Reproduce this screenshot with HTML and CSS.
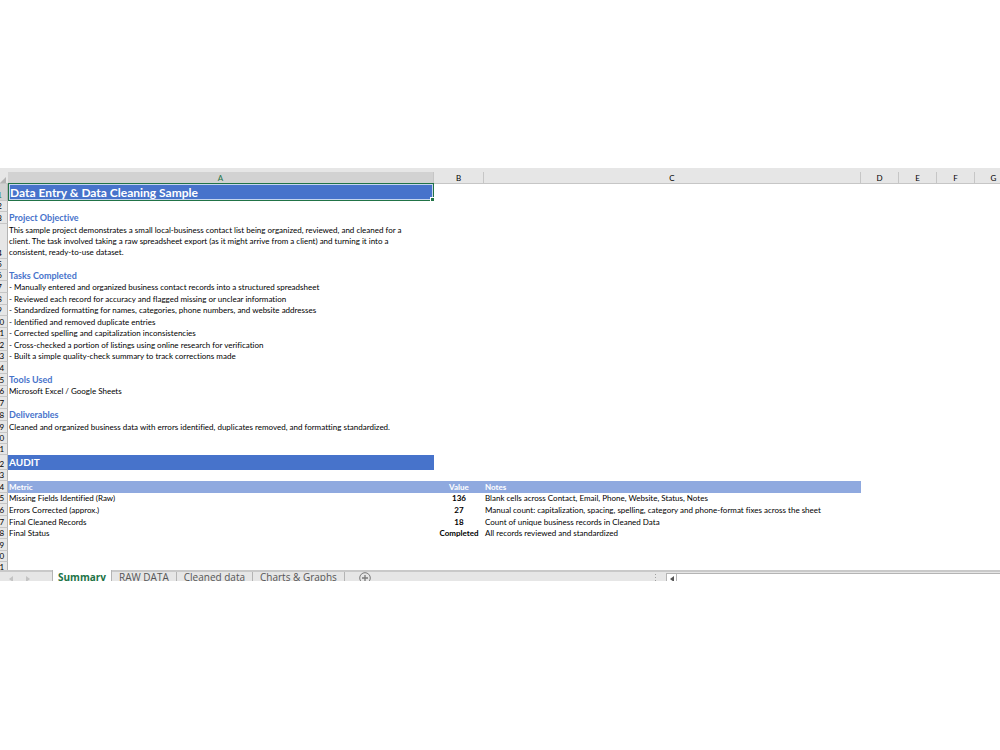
FILE: index.html
```
<!DOCTYPE html>
<html lang="en">
<head>
    <meta charset="UTF-8">
    <meta name="viewport" content="width=device-width, initial-scale=1.0">
    <title>Data Entry &amp; Data Cleaning Sample</title>
    <link rel="stylesheet" href="styles.css">
</head>
<body>
    <div class="workbook">
        <!-- Grid -->
        <div class="grid">
            <table class="sheet">
                <colgroup>
                    <col class="col-num">
                    <col class="col-a">
                    <col class="col-b">
                    <col class="col-c">
                    <col class="col-d">
                    <col class="col-d">
                    <col class="col-d">
                    <col class="col-d">
                </colgroup>
                <thead>
                    <tr>
                        <th class="corner"><svg width="6" height="6" viewBox="0 0 6 6"><path d="M6 0v6H0z" fill="#b4b4b4"/></svg></th>
                        <th class="selected"><span>A</span></th>
                        <th><span>B</span></th>
                        <th><span>C</span></th>
                        <th><span>D</span></th>
                        <th><span>E</span></th>
                        <th><span>F</span></th>
                        <th><span>G</span></th>
                    </tr>
                </thead>
                <tbody>
                    <tr class="title-row"><th class="selected">1</th><td class="banner active-cell">Data Entry &amp; Data Cleaning Sample</td></tr>
                    <tr class="short"><th>2</th><td></td></tr>
                    <tr><th>3</th><td class="heading">Project Objective</td></tr>
                    <tr class="text-row"><th>4</th><td class="wrap">This sample project demonstrates a small local-business contact list being organized, reviewed, and cleaned for a client. The task involved taking a raw spreadsheet export (as it might arrive from a client) and turning it into a consistent, ready-to-use dataset.</td></tr>
                    <tr class="short"><th>5</th><td></td></tr>
                    <tr class="short"><th>6</th><td class="heading">Tasks Completed</td></tr>
                    <tr><th>7</th><td>- Manually entered and organized business contact records into a structured spreadsheet</td></tr>
                    <tr><th>8</th><td>- Reviewed each record for accuracy and flagged missing or unclear information</td></tr>
                    <tr class="short"><th>9</th><td>- Standardized formatting for names, categories, phone numbers, and website addresses</td></tr>
                    <tr><th>10</th><td>- Identified and removed duplicate entries</td></tr>
                    <tr class="short"><th>11</th><td>- Corrected spelling and capitalization inconsistencies</td></tr>
                    <tr><th>12</th><td>- Cross-checked a portion of listings using online research for verification</td></tr>
                    <tr class="short"><th>13</th><td>- Built a simple quality-check summary to track corrections made</td></tr>
                    <tr><th>14</th><td></td></tr>
                    <tr><th>15</th><td class="heading">Tools Used</td></tr>
                    <tr class="short"><th>16</th><td>Microsoft Excel / Google Sheets</td></tr>
                    <tr><th>17</th><td></td></tr>
                    <tr><th>18</th><td class="heading">Deliverables</td></tr>
                    <tr><th>19</th><td>Cleaned and organized business data with errors identified, duplicates removed, and formatting standardized.</td></tr>
                    <tr class="short"><th>20</th><td></td></tr>
                    <tr class="short"><th>21</th><td></td></tr>
                    <tr class="audit-row"><th>22</th><td class="banner">AUDIT</td></tr>
                    <tr class="short"><th>23</th><td></td></tr>
                    <tr class="metric-head"><th>24</th><td>Metric</td><td class="value">Value</td><td>Notes</td></tr>
                    <tr class="short"><th>25</th><td>Missing Fields Identified (Raw)</td><td class="value">136</td><td>Blank cells across Contact, Email, Phone, Website, Status, Notes</td></tr>
                    <tr><th>26</th><td>Errors Corrected (approx.)</td><td class="value">27</td><td>Manual count: capitalization, spacing, spelling, category and phone-format fixes across the sheet</td></tr>
                    <tr><th>27</th><td>Final Cleaned Records</td><td class="value">18</td><td>Count of unique business records in Cleaned Data</td></tr>
                    <tr class="short"><th>28</th><td>Final Status</td><td class="value">Completed</td><td>All records reviewed and standardized</td></tr>
                    <tr><th>29</th><td></td></tr>
                    <tr class="short"><th>30</th><td></td></tr>
                    <tr class="short"><th>31</th><td></td></tr>
                </tbody>
            </table>
        </div>

        <!-- Sheet tabs -->
        <div class="bottom-bar">
            <div class="tab-nav">
                <svg width="4" height="6" viewBox="0 0 4 6"><path d="M4 0v6L0 3z" fill="#c3c3c3"/></svg>
                <svg width="4" height="6" viewBox="0 0 4 6"><path d="M0 0v6l4-3z" fill="#c3c3c3"/></svg>
            </div>
            <nav class="tabs">
                <button type="button" class="tab active">Summary</button>
                <button type="button" class="tab">RAW DATA</button>
                <button type="button" class="tab">Cleaned data</button>
                <button type="button" class="tab">Charts &amp; Graphs</button>
            </nav>
            <button type="button" class="add-tab" aria-label="New sheet">
                <svg width="12" height="12" viewBox="0 0 12 12" fill="none" stroke="#7a7a7a"><circle cx="6" cy="6" r="5.3"/><path d="M6 3v6M3 6h6" stroke-width="1.3"/></svg>
            </button>
            <div class="scroll">
                <svg class="grip" width="2" height="8" viewBox="0 0 2 8" fill="#a0a0a0"><path d="M0 0h1v1H0zM0 3h1v1H0zM0 6h1v1H0z"/></svg>
                <button type="button" class="scroll-left" aria-label="Scroll left">
                    <svg width="4" height="6" viewBox="0 0 4 6"><path d="M4 0v6L0 3z" fill="#555"/></svg>
                </button>
                <div class="scroll-thumb"></div>
            </div>
        </div>
    </div>
</body>
</html>
```
FILE: styles.css
```
body {
    margin: 0;
    padding-top: 168px;
    background-color: #fff;
    font-family: "Open Sans", "Noto Sans", sans-serif;
    color: #000;
    overflow-x: hidden;
}

.workbook {
    overflow: hidden;
}

.grid {
    height: 402px;
    overflow: hidden;
    background: linear-gradient(#e6e6e6 15px, #c6c6c6 15px, #c6c6c6 16px, #fff 16px);
}

/* the row number column is half scrolled out of view */
.sheet {
    width: 1021px;
    margin-left: -8px;
    table-layout: fixed;
    border-collapse: separate;
    border-spacing: 0;
    font-family: Lato, "Open Sans", sans-serif;
    font-size: 8px;
    font-variant-ligatures: none;
    line-height: 11px;
}

.col-num { width: 16px; }
.col-a { width: 426px; }
.col-b { width: 50px; }
.col-c { width: 377px; }
.col-d { width: 38px; }

.sheet th,
.sheet td {
    box-sizing: border-box;
    height: 12px;
    padding: 0;
    white-space: nowrap;
}

.sheet td {
    padding-left: 1px;
}

.sheet thead th {
    height: 16px;
    padding-top: 4px;
    border-bottom: 1px solid #c6c6c6;
    font-weight: normal;
}

.sheet thead span {
    display: block;
    height: 11px;
    border-right: 1px solid #c6c6c6;
    line-height: 13px;
}

.sheet thead .selected {
    border-bottom-color: #217346;
}

.sheet thead .selected span {
    background-color: #d2d2d2;
    color: #217346;
}

.sheet .corner {
    text-align: right;
    line-height: 0;
    padding-right: 2px;
    vertical-align: bottom;
}

.sheet tbody th {
    background-color: #e6e6e6;
    border-right: 1px solid #b4b4b4;
    border-bottom: 1px solid #c6c6c6;
    font-weight: normal;
    line-height: 10px;
    vertical-align: bottom;
}

.sheet tbody .selected {
    background-color: #d2d2d2;
    color: #217346;
}

.sheet .short th,
.sheet .short td {
    height: 11px;
}

.sheet .title-row td {
    height: 17px;
    font-size: 12px;
    line-height: 13px;
}

.sheet .text-row td {
    height: 35px;
}

.sheet .audit-row td {
    height: 15px;
    font-size: 10px;
}

.sheet .wrap {
    white-space: normal;
    padding-right: 16px;
    line-height: 11px;
}

.banner {
    background-color: #4773cb;
    color: #fff;
    font-weight: bold;
}

.sheet .active-cell {
    position: relative;
    border: 1px solid #217346;
    border-top: 0;
    box-shadow: inset 0 0 0 1px #c5d5ee;
}

/* fill handle */
.active-cell::after {
    content: "";
    position: absolute;
    right: -1px;
    bottom: -1px;
    width: 3px;
    height: 3px;
    border-top: 1px solid #fff;
    border-left: 1px solid #fff;
    background-color: #217346;
}

.sheet .heading {
    color: #4773cb;
    font-size: 9px;
    font-weight: bold;
    line-height: 10px;
}

.metric-head td {
    background-color: #8fa9df;
    color: #fff;
    font-weight: bold;
}

.sheet .value {
    padding: 0;
    text-align: center;
    font-weight: bold;
}

.bottom-bar {
    display: flex;
    height: 11px;
    overflow: hidden;
    background: linear-gradient(#c9c9c9 2px, #e6e6e6 2px);
}

.tab-nav {
    display: flex;
    gap: 13px;
    width: 43px;
    padding: 6px 0 0 9px;
    border-right: 1px solid #b4b4b4;
}

.tabs {
    display: flex;
    align-items: flex-start;
}

.tab {
    height: 10px;
    margin-top: 2px;
    padding: 0 7px;
    border: 0;
    border-right: 1px solid #b4b4b4;
    background: none;
    font-family: "Open Sans", "Noto Sans", sans-serif;
    font-size: 10px;
    line-height: 10px;
    color: #555;
    cursor: pointer;
}

.tab.active {
    height: 14px;
    margin-top: 0;
    padding: 0 5px;
    background-color: #fff;
    color: #217346;
    font-weight: bold;
}

.add-tab {
    height: 14px;
    margin-left: 14px;
    padding: 2px 0 0;
    border: 0;
    background: none;
    line-height: 0;
}

.scroll {
    display: flex;
    flex: 0 0 345px;
    margin-left: auto;
}

.grip {
    margin: 4px 9px 0 0;
}

.scroll-left {
    width: 11px;
    height: 12px;
    margin-top: 3px;
    padding: 0;
    border: 1px solid #b4b4b4;
    background-color: #fff;
    line-height: 0;
}

.scroll-thumb {
    flex: 1;
    height: 12px;
    margin-top: 3px;
    border-top: 1px solid #b4b4b4;
    background-color: #fff;
}
```
